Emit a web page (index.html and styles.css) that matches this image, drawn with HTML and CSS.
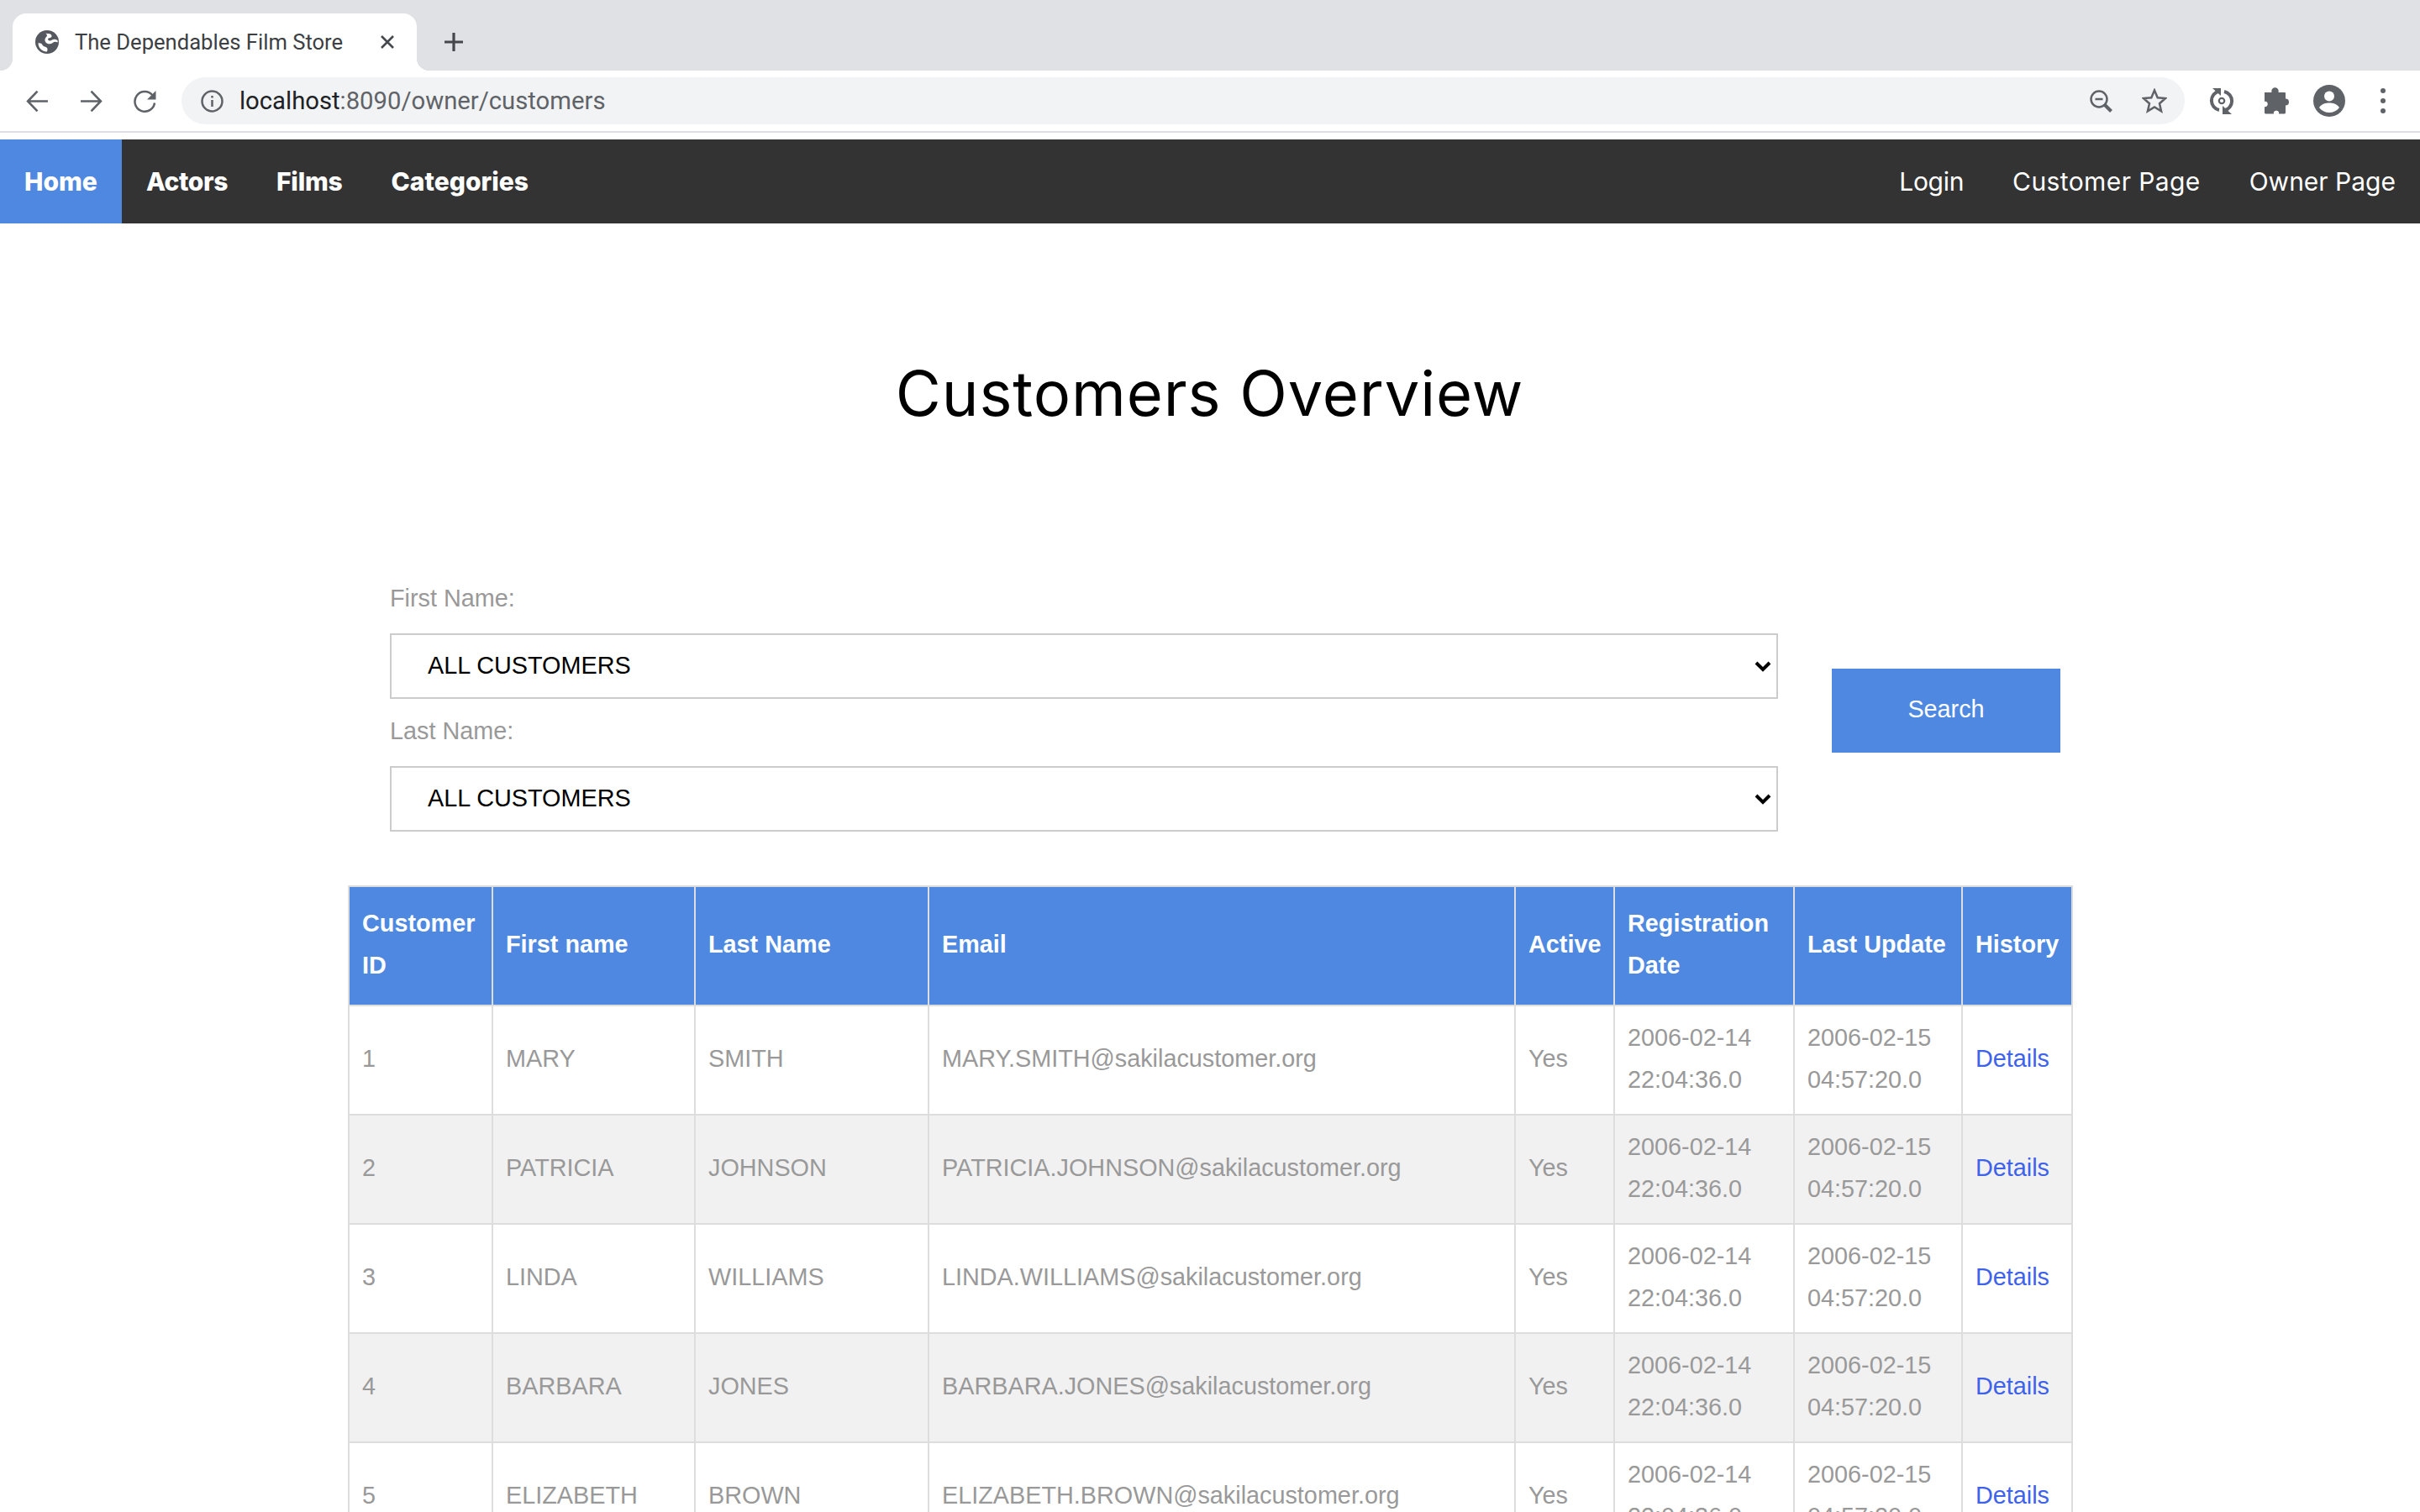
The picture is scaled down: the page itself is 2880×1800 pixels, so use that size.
FILE: index.html
```html
<!DOCTYPE html>
<html lang="en">
<head>
  <meta charset="UTF-8" />
  <title>The Dependables Film Store</title>
  <link rel="stylesheet" href="styles.css">
</head>
<body>

  <!-- Browser chrome -->
  <div class="tabstrip">
    <div class="tab">
      <svg class="favicon" viewBox="0 0 28 28">
        <circle cx="14" cy="14" r="14" fill="#55585e" />
        <path d="M14 4c3.500-.5 5 .8 5.500 2.500.4 1.500-1 2.500-2.700 2.800-1.500.3-2.300 1.200-1.300 2.500 1 1.200 3 .6 4.500-.3 1.800-1 4-1 6.500 .5l.2 2.500c-2.500-1.200-4.200-1-5.700 .2-2.500 2-6.500 2.300-8.500-.2-1.800-2.300-1.300-5 .8-6.800 1-.9 1-2.300-1-4.200z" fill="#fff" />
        <path d="M3 15.500c2.500-.8 4.500 0 5.500 2 .8 1.600 2.500 2 4 2.500 2 .6 2.500 2.500 1.500 5.500-5 .3-10.500-4-10.500-10z" fill="#fff" />
      </svg>
      <span class="tab-title">The Dependables Film Store</span>
      <svg class="tab-close" viewBox="0 0 16 16"><path d="M1 1l14 14M15 1L1 15" /></svg>
    </div>
    <svg class="new-tab" viewBox="0 0 24 24"><path d="M12 1v22M1 12h22" /></svg>
  </div>

  <div class="toolbar">
    <svg class="tool-icon" viewBox="0 0 26 26"><path class="line" d="M25 13H2M13 1.500 2 13l11 11.500" /></svg>
    <svg class="tool-icon" viewBox="0 0 26 26"><path class="line" d="M1 13h23M13 1.500 24 13 13 24.500" /></svg>
    <svg class="tool-icon" viewBox="0 0 27 27"><path class="line" d="M22.500 6.500A11.800 11.800 0 1 0 25 15.500" /><path class="solid" d="M26.500 1v10.500H16z" /></svg>
    <div class="omnibox">
      <svg class="info-icon" viewBox="0 0 27 27">
        <circle class="line" cx="13.500" cy="13.500" r="12" />
        <path class="line" d="M13.500 12v8M13.500 7v2.500" />
      </svg>
      <span class="url"><span class="url-host">localhost</span>:8090/owner/customers</span>
      <svg class="zoom-icon" viewBox="0 0 27 27"><circle class="line" cx="11" cy="11" r="9.500" /><path class="line" d="M6.500 11h9" /><path class="thick" d="M17.500 17.500l8 8" /></svg>
      <svg class="star-icon" viewBox="0 0 30 30"><path class="line" d="M15 2.500l3.700 8.700 9.300.8-7 6.200 2.100 9.200-8.100-4.900-8.100 4.900 2.100-9.200-7-6.200 9.300-.8z" /></svg>
    </div>
    <div class="ext-icons">
      <svg class="sync-icon" viewBox="0 0 30 34">
        <path class="thick" d="M12 5.500A11.500 11.500 0 0 0 12 28" />
        <path class="thick" d="M18 6A11.500 11.500 0 0 1 18 28.500" />
        <path class="solid" d="M4 2h10v9z" />
        <path class="solid" d="M27 33H16v-10z" />
        <circle class="thin" cx="15" cy="17" r="3.200" />
      </svg>
      <svg class="puzzle-icon" viewBox="0 0 30 32">
        <path class="solid" d="M1 6h8.500a3.800 3.800 0 0 1-.2-1.500 4.200 4.200 0 0 1 8.400 0c0 .5-.1 1-.2 1.500H25a1 1 0 0 1 1 1v6.500a4 4 0 0 1 0 8V30a1.500 1.500 0 0 1-1.500 1.500h-6.500c1.500-5-7.500-5-6 0H2.500A1.500 1.500 0 0 1 1 30v-7c5 1.500 5-7.500 0-6z" />
      </svg>
      <svg class="avatar-icon" viewBox="0 0 38 38">
        <circle class="solid" cx="19" cy="19" r="19" />
        <circle cx="19" cy="13.500" r="6" fill="#fff" />
        <path d="M7 27c3-4.500 8-5.500 12-5.500s9 1 12 5.500c-3 4-7.500 6-12 6s-9-2-12-6z" fill="#fff" />
      </svg>
      <svg class="dots-icon" viewBox="0 0 6 30">
        <circle class="solid" cx="3" cy="3" r="3" />
        <circle class="solid" cx="3" cy="15" r="3" />
        <circle class="solid" cx="3" cy="27" r="3" />
      </svg>
    </div>
  </div>

  <!-- Site navigation -->
  <nav class="topnav">
    <a class="nav-main active" href="#">Home</a>
    <a class="nav-main actors" href="#">Actors</a>
    <a class="nav-main films" href="#">Films</a>
    <a class="nav-main" href="#">Categories</a>
    <div class="nav-right">
      <a class="nav-side login" href="#">Login</a>
      <a class="nav-side customer" href="#">Customer Page</a>
      <a class="nav-side" href="#">Owner Page</a>
    </div>
  </nav>

  <main class="content">
    <h1>Customers Overview</h1>

    <form class="search-form">
      <div class="search-fields">
        <label for="firstName">First Name:</label>
        <select id="firstName"><option>ALL CUSTOMERS</option></select>
        <label for="lastName">Last Name:</label>
        <select id="lastName"><option>ALL CUSTOMERS</option></select>
      </div>
      <button type="button">Search</button>
    </form>

    <table class="customers">
      <colgroup>
        <col class="col-id"><col class="col-first"><col class="col-last"><col class="col-email">
        <col class="col-active"><col class="col-reg"><col class="col-update"><col class="col-history">
      </colgroup>
      <thead>
        <tr>
          <th>Customer ID</th>
          <th>First name</th>
          <th>Last Name</th>
          <th>Email</th>
          <th>Active</th>
          <th>Registration Date</th>
          <th>Last Update</th>
          <th>History</th>
        </tr>
      </thead>
      <tbody>
        <tr>
          <td>1</td><td>MARY</td><td>SMITH</td><td>MARY.SMITH@sakilacustomer.org</td><td>Yes</td>
          <td>2006-02-14 22:04:36.0</td><td>2006-02-15 04:57:20.0</td><td><a href="#">Details</a></td>
        </tr>
        <tr>
          <td>2</td><td>PATRICIA</td><td>JOHNSON</td><td>PATRICIA.JOHNSON@sakilacustomer.org</td><td>Yes</td>
          <td>2006-02-14 22:04:36.0</td><td>2006-02-15 04:57:20.0</td><td><a href="#">Details</a></td>
        </tr>
        <tr>
          <td>3</td><td>LINDA</td><td>WILLIAMS</td><td>LINDA.WILLIAMS@sakilacustomer.org</td><td>Yes</td>
          <td>2006-02-14 22:04:36.0</td><td>2006-02-15 04:57:20.0</td><td><a href="#">Details</a></td>
        </tr>
        <tr>
          <td>4</td><td>BARBARA</td><td>JONES</td><td>BARBARA.JONES@sakilacustomer.org</td><td>Yes</td>
          <td>2006-02-14 22:04:36.0</td><td>2006-02-15 04:57:20.0</td><td><a href="#">Details</a></td>
        </tr>
        <tr>
          <td>5</td><td>ELIZABETH</td><td>BROWN</td><td>ELIZABETH.BROWN@sakilacustomer.org</td><td>Yes</td>
          <td>2006-02-14 22:04:36.0</td><td>2006-02-15 04:57:20.0</td><td><a href="#">Details</a></td>
        </tr>
      </tbody>
    </table>
  </main>

</body>
</html>
```

FILE: styles.css
```css
/* Base */
html, body {
  height: 100%;
}
body {
  margin: 0;
  height: 1800px;
  overflow: hidden;
  background: #fff;
  font-family: "Liberation Sans", Arial, sans-serif;
  color: #999;
}

/* Browser tabs */
.tabstrip {
  height: 84px;
  background: #dfe1e5;
  padding: 16px 0 0 15px;
  box-sizing: border-box;
  display: flex;
  align-items: flex-start;
}
.tab {
  position: relative;
  width: 481px;
  height: 68px;
  background: #fff;
  border-radius: 16px 16px 0 0;
  display: flex;
  align-items: center;
  padding: 0 27px;
  box-sizing: border-box;
}
.tab::before, .tab::after {
  content: "";
  position: absolute;
  bottom: 0;
  width: 15px;
  height: 15px;
}
.tab::before {
  left: -15px;
  background: radial-gradient(circle at 0 0, #dfe1e5 15px, #fff 15.5px);
}
.tab::after {
  right: -15px;
  background: radial-gradient(circle at 100% 0, #dfe1e5 15px, #fff 15.5px);
}
.favicon {
  width: 28px;
  height: 28px;
  flex-shrink: 0;
}
.tab-title {
  margin-left: 19px;
  font-family: Roboto, sans-serif;
  font-size: 25.6px;
  color: #3c4043;
  white-space: nowrap;
}
.tab-close {
  margin-left: auto;
  width: 16px;
  height: 16px;
  fill: none;
  stroke: #45484d;
  stroke-width: 2.6;
}
.new-tab {
  width: 24px;
  height: 24px;
  margin: 22px 0 0 32px;
  fill: none;
  stroke: #44474c;
  stroke-width: 3.2;
}

/* Browser toolbar */
.toolbar {
  height: 74px;
  background: #fff;
  border-bottom: 2px solid #dedfe5;
  display: flex;
  align-items: flex-start;
  padding: 8px 0 0 31px;
  box-sizing: border-box;
}
.tool-icon {
  width: 27px;
  height: 27px;
  margin: 15px 37px 0 0;
  flex-shrink: 0;
}
.tool-icon:nth-child(3) {
  margin-right: 30px;
}
.line {
  fill: none;
  stroke: #5f6368;
  stroke-width: 2.5;
}
.solid {
  fill: #5f6368;
}
.thick {
  fill: none;
  stroke: #5f6368;
  stroke-width: 4;
}
.thin {
  fill: none;
  stroke: #5f6368;
  stroke-width: 2.2;
}
.omnibox {
  width: 2384px;
  height: 56px;
  background: #f1f3f4;
  border-radius: 28px;
  display: flex;
  align-items: center;
  padding: 0 21px 0 23px;
  box-sizing: border-box;
  flex-shrink: 0;
}
.info-icon {
  width: 27px;
  height: 27px;
}
.url {
  margin-left: 19px;
  font-family: Roboto, sans-serif;
  font-size: 29.25px;
  color: #5f6368;
}
.url-host {
  color: #202124;
}
.zoom-icon {
  width: 27px;
  height: 27px;
  margin-left: auto;
}
.star-icon {
  width: 30px;
  height: 30px;
  margin-left: 35px;
}
.ext-icons {
  display: flex;
  align-items: center;
  height: 56px;
  margin-left: 29px;
}
.sync-icon {
  width: 30px;
  height: 34px;
}
.puzzle-icon {
  width: 30px;
  height: 32px;
  margin-left: 35px;
}
.avatar-icon {
  width: 38px;
  height: 38px;
  margin-left: 29px;
}
.dots-icon {
  width: 6px;
  height: 30px;
  margin-left: 42px;
}

/* Site nav */
.topnav {
  margin-top: 8px;
  height: 100px;
  background: #333;
  display: flex;
  align-items: stretch;
}
.topnav a {
  display: flex;
  align-items: center;
  padding: 0 29px;
  color: #fff;
  text-decoration: none;
  font-family: Inter, sans-serif;
  font-size: 30px;
}
.nav-main {
  font-weight: 800;
}
.nav-side {
  font-weight: 400;
}
.topnav a.actors {
  letter-spacing: -.4px;
}
.topnav a.films {
  letter-spacing: -.2px;
}
.topnav a.login {
  letter-spacing: -.3px;
}
.topnav a.customer {
  letter-spacing: .4px;
}
.topnav a.active {
  background: #4e88e0;
}
.nav-right {
  margin-left: auto;
  display: flex;
}

/* Page content */
.content {
  width: 2051px;
  margin-left: 414px;
}
h1 {
  margin: 152px 0 168px;
  height: 100px;
  font-family: Inter, sans-serif;
  font-size: 74px;
  font-weight: 400;
  letter-spacing: .9px;
  line-height: 100px;
  color: #000;
  text-align: center;
}

/* Search form */
.search-form {
  display: flex;
  align-items: center;
  padding-left: 50px;
  margin-bottom: 64px;
}
.search-fields {
  width: 1652px;
  flex-shrink: 0;
}
label {
  display: block;
  height: 50px;
  line-height: 52px;
  margin-bottom: 18px;
  font-size: 28.8px;
  color: #999;
}
select {
  display: block;
  width: 100%;
  height: 78px;
  margin-bottom: 12px;
  padding: 0 43px 3px;
  box-sizing: border-box;
  border: 2.500px solid #ccc;
  border-radius: 0;
  background: #fff url("data:image/svg+xml,%3Csvg xmlns='http://www.w3.org/2000/svg' viewBox='0 0 20 13'%3E%3Cpath d='M2 2l8 8 8-8' fill='none' stroke='%23000' stroke-width='4'/%3E%3C/svg%3E") no-repeat right 6px center / 20px 13px;
  appearance: none;
  font-family: "Liberation Sans", Arial, sans-serif;
  font-size: 28.8px;
  color: #000;
}
select:last-child {
  margin-bottom: 0;
}
button {
  width: 272px;
  height: 100px;
  margin: 16px 0 0 64px;
  padding: 0 0 3px;
  border: none;
  background: #4e88e0;
  color: #fff;
  font-family: "Liberation Sans", Arial, sans-serif;
  font-size: 28.8px;
}

/* Customers table */
.customers {
  width: 2051px;
  table-layout: fixed;
  border-collapse: collapse;
  line-height: 50px;
}
.col-id { width: 171px; }
.col-first { width: 241px; }
.col-last { width: 278px; }
.col-email { width: 698px; }
.col-active { width: 118px; }
.col-reg { width: 214px; }
.col-update { width: 200px; }
.col-history { width: 131px; }
.customers th, .customers td {
  border: 2px solid #ddd;
  padding: 12px 15px 16px;
  text-align: left;
  font-size: 28.8px;
}
.customers th {
  background: #4e88e0;
  color: #fff;
  font-weight: 700;
  padding-top: 18px;
  padding-bottom: 22px;
}
.customers tbody tr:nth-child(even) {
  background: #f1f1f1;
}
.customers a {
  color: #3e62ea;
  text-decoration: none;
}
```
